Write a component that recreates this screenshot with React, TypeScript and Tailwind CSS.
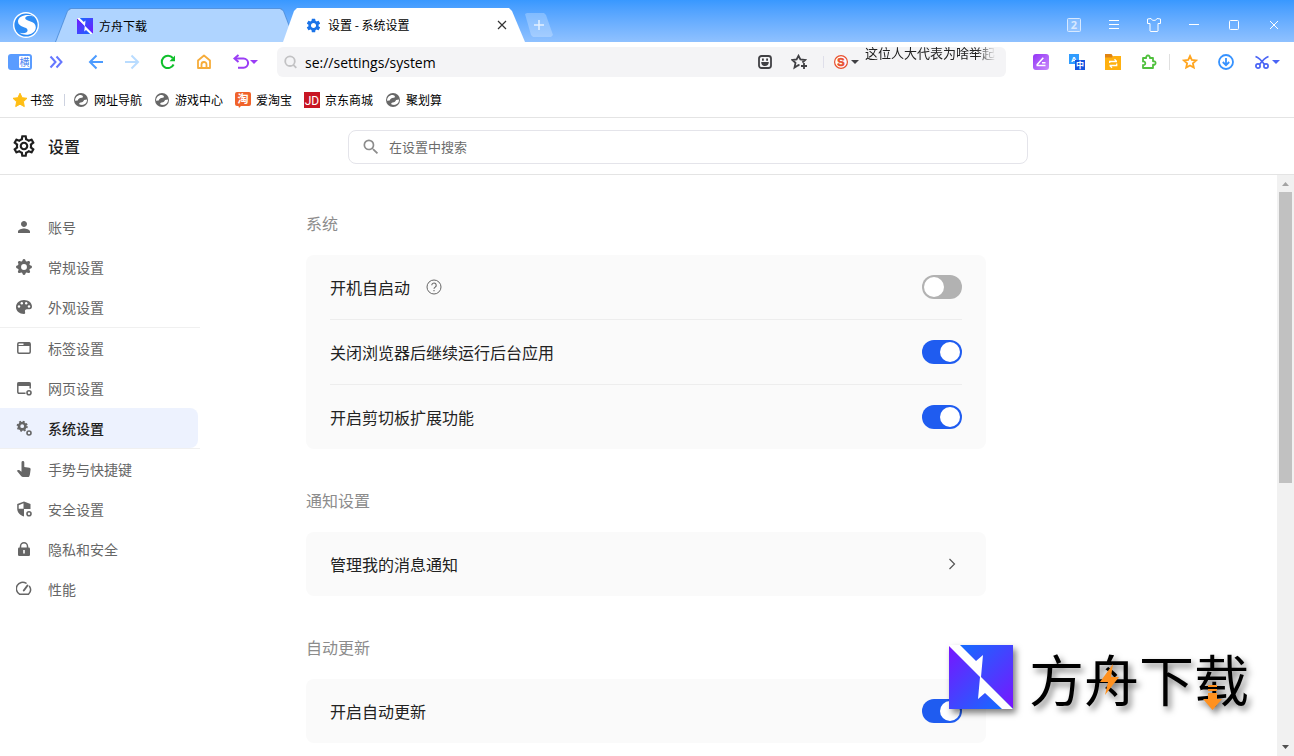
import React, { useState } from "react";
import { MdOutlineSettings, MdSettings, MdPerson, MdSearch } from "react-icons/md";
import { BsGearFill } from "react-icons/bs";

type IconProps = { className?: string };

/* ---------- brand icons ---------- */

const BrowserLogo = () => (
  <svg viewBox="0 0 26 26" className="size-[26px]" aria-hidden="true">
    <circle cx="13" cy="13" r="13" fill="#fff" />
    <circle cx="13" cy="13" r="11.6" fill="#2f8df5" />
    <path
      d="M20.5 4.4C15 1.400 5 3.600 5 9.600c0 6 9.600 5 9.600 8.600 0 2.600-3.600 3.800-8.200 2.600 6 4 16.400 1.600 16.400-5.600 0-7-10.600-5.600-10.600-9 0-2.200 3.900-3.200 8.300-1.800z"
      fill="#fff"
    />
  </svg>
);

const ArkLogo = ({ className }: IconProps) => (
  <svg viewBox="0 0 64 64" className={className} aria-hidden="true">
    <defs>
      <linearGradient id="arkTop" x1="0" y1="0" x2="1" y2="1">
        <stop offset="0" stopColor="#0a74ff" />
        <stop offset="1" stopColor="#7a14ff" />
      </linearGradient>
      <linearGradient id="arkBottom" x1="0" y1="0" x2="1" y2="1">
        <stop offset="0" stopColor="#7a14ff" />
        <stop offset="1" stopColor="#0a74ff" />
      </linearGradient>
    </defs>
    <path d="M0 0h64v64z" fill="url(#arkTop)" />
    <path d="M0 0v64h64z" fill="url(#arkBottom)" />
    <path d="M0 0h11l16 16 7-6-2 22 32 32H53L36 48l-7 6 2-22L0 1z" fill="#fff" />
  </svg>
);

const GlobeIcon = () => (
  <svg viewBox="0 0 16 16" className="size-4" aria-hidden="true">
    <circle cx="8" cy="8" r="7" fill="#676767" />
    <path d="M2 8.800C2.200 5 5 2.600 8.500 3.200c1.800.3 2 2.400.2 2.600-2.400.2-3.200.8-4 2.600z" fill="#fff" />
    <path d="M14 7.600c.2 3.800-3 6-6.500 5.200-1.600-.4-1.800-2.200 0-2.400 2.400-.2 2.800-.8 3.600-2.400z" fill="#fff" />
  </svg>
);

const TaobaoIcon = () => (
  <svg viewBox="0 0 16 16" className="size-4 overflow-visible" aria-hidden="true">
    <path d="M2 0h12a2 2 0 0 1 2 2v10a2 2 0 0 1-2 2H6l-2 2-.5-2H2a2 2 0 0 1-2-2V2a2 2 0 0 1 2-2z" fill="#f0632b" />
    <text x="8" y="11" textAnchor="middle" fontSize="11" fontWeight="700" fill="#fff">淘</text>
  </svg>
);

const JdIcon = () => (
  <svg viewBox="0 0 16 16" className="size-4 overflow-visible" aria-hidden="true">
    <rect width="16" height="16" fill="#c81623" />
    <text x="8" y="12.500" textAnchor="middle" fontSize="12" fontFamily="Roboto" fill="#fff">JD</text>
  </svg>
);

const StarIcon = () => (
  <svg viewBox="0 0 16 16" className="size-4" aria-hidden="true">
    <path d="M8 1.200l2.100 4.500 4.900.6-3.600 3.400.9 4.900L8 12.200l-4.300 2.400.9-4.900L1 6.300l4.900-.6z" fill="#ffbe14" stroke="#ffbe14" strokeLinejoin="round" />
  </svg>
);

/* ---------- toolbar icons ---------- */

const SidebarIcon = () => (
  <svg viewBox="0 0 24 16" className="h-4 w-6" aria-hidden="true">
    <rect width="24" height="16" rx="3" fill="#5a9cff" />
    <rect x="11" y="2" width="11" height="12" rx="1" fill="#fff" />
    <text x="16.500" y="12" textAnchor="middle" fontSize="10" fill="#4a7ff0">横</text>
  </svg>
);

const ChevronsIcon = () => (
  <svg viewBox="0 0 14 14" className="size-3.5" fill="none" stroke="#6577ff" strokeWidth="2" aria-hidden="true">
    <path d="M1.500 1.500L6.500 7l-5 5.500M7.500 1.500L12.500 7l-5 5.500" />
  </svg>
);

const ArrowIcon = ({ className }: IconProps) => (
  <svg viewBox="0 0 16 16" className={className} fill="none" stroke="currentColor" strokeWidth="2" aria-hidden="true">
    <path d="M15 8H2M8.500 1.500L2 8l6.500 6.500" />
  </svg>
);

const ReloadIcon = () => (
  <svg viewBox="0 0 16 16" className="size-4" aria-hidden="true">
    <path d="M13.600 10.500A6.200 6.200 0 1 1 12.800 4" fill="none" stroke="#0fbf2b" strokeWidth="2" />
    <path d="M15 1.500V7.200H9.500z" fill="#0fbf2b" />
  </svg>
);

const HomeIcon = () => (
  <svg viewBox="0 0 16 16" className="size-4" fill="none" stroke="#f6ac3a" strokeWidth="1.800" strokeLinejoin="round" aria-hidden="true">
    <path d="M2 6.500L8 1.500l6 5V14H2z" />
    <path d="M5.500 14v-3.500a2.500 2.500 0 0 1 5 0V14" />
  </svg>
);

const UndoIcon = () => (
  <svg viewBox="0 0 26 16" className="h-4 w-[26px]" aria-hidden="true">
    <path d="M3 4.500h8.500a4.600 4.600 0 0 1 0 9.200H6" fill="none" stroke="#9a3df5" strokeWidth="2" />
    <path d="M6.500 1L2.500 4.500l4 3.500" fill="none" stroke="#9a3df5" strokeWidth="2" />
    <path d="M18 6h8l-4 4z" fill="#9a3df5" />
  </svg>
);

const SmileIcon = () => (
  <svg viewBox="0 0 14 14" className="size-3.5" aria-hidden="true">
    <rect x="1" y="1" width="12" height="12" rx="2.500" fill="none" stroke="#404044" strokeWidth="1.800" />
    <path d="M4 3.500h1.800v2.200H4zM8.200 3.500H10v2.200H8.200zM3.200 7h7.600c0 2.600-1.600 4-3.800 4S3.200 9.600 3.200 7z" fill="#404044" />
  </svg>
);

const StarAddIcon = () => (
  <svg viewBox="0 0 16 16" className="size-4" fill="none" stroke="#404044" strokeWidth="1.800" aria-hidden="true">
    <path d="M8.500 11.600L7.500 11l-4 2.600 1-4.700L1.400 6l4.200-.5L7.500 1.800l1.900 3.700 4.800.5-2.800 2.500" />
    <path d="M13 9v6M10 12h6" />
  </svg>
);

const SogouIcon = () => (
  <svg viewBox="0 0 14 14" className="size-3.5" aria-hidden="true">
    <circle cx="7" cy="7" r="6.400" fill="#fff" stroke="#e8502f" strokeWidth="1.200" />
    <text x="7" y="11" textAnchor="middle" fontSize="11" fontWeight="900" fontFamily="Liberation Sans" fill="#e8502f" stroke="#e8502f" strokeWidth=".6">S</text>
  </svg>
);

const NoteIcon = () => (
  <svg viewBox="0 0 16 16" className="size-4" aria-hidden="true">
    <defs>
      <linearGradient id="note" x1="0" y1="0" x2="1" y2="1">
        <stop offset="0" stopColor="#9333f7" />
        <stop offset="1" stopColor="#c98bfa" />
      </linearGradient>
    </defs>
    <rect width="16" height="16" rx="3" fill="url(#note)" />
    <path d="M3.800 11l6.500-7.200M3.500 11.500h9M9 8.700h3.500" fill="none" stroke="#fff" strokeWidth="1.600" />
  </svg>
);

const TranslateIcon = () => (
  <svg viewBox="0 0 16 16" className="size-4" aria-hidden="true">
    <rect width="10" height="10" fill="#2f9cff" />
    <text x="5" y="8" textAnchor="middle" fontSize="8" fontWeight="700" fontFamily="Liberation Sans" fill="#fff">A</text>
    <rect x="6" y="6" width="10" height="10" fill="#1554e0" />
    <text x="11" y="14" textAnchor="middle" fontSize="8" fontWeight="700" fill="#fff">中</text>
  </svg>
);

const FolderSyncIcon = () => (
  <svg viewBox="0 0 16 16" className="size-4" aria-hidden="true">
    <path d="M0 0h6.500L8 2.500V6H0z" fill="#e08412" />
    <path d="M0 3.500h7L8.500 2H16v14H0z" fill="#ffb00f" />
    <path d="M4.700 9V7.500H12M9.500 5.200l2.200 2.200M11.700 9.500V11.500H4.500M7 13.800l-2.200-2.200" fill="none" stroke="#fff" strokeWidth="1.300" />
  </svg>
);

const PuzzleIcon = () => (
  <svg viewBox="0 0 16 16" className="size-4" fill="none" stroke="#4fc03c" strokeWidth="1.800" strokeLinejoin="round" aria-hidden="true">
    <path d="M2 4h3.200C4.800 2.500 5.800 1.500 7 1.500S9.200 2.500 8.800 4H12v3.300c1.500-.3 2.600.5 2.600 1.700s-1.100 2-2.600 1.700V14H2v-3c1.500.2 2.300-.7 2.300-1.800S3.500 7.200 2 7.500z" />
  </svg>
);

const FavoriteIcon = () => (
  <svg viewBox="0 0 16 16" className="size-4" fill="none" stroke="#ffa51f" strokeWidth="1.800" aria-hidden="true">
    <path d="M8 2l1.800 3.900 4.300.5-3.200 2.900.9 4.300L8 11.500l-3.800 2.100.9-4.300-3.200-2.900 4.300-.5z" />
  </svg>
);

const DownloadIcon = () => (
  <svg viewBox="0 0 16 16" className="size-4" fill="none" stroke="#3692ff" strokeWidth="1.800" aria-hidden="true">
    <circle cx="8" cy="8" r="7" />
    <path d="M8 4v7M4.800 8L8 11.200 11.200 8" />
  </svg>
);

const ScissorsIcon = () => (
  <svg viewBox="0 0 26 16" className="h-4 w-[26px]" aria-hidden="true">
    <g fill="none" stroke="#4a64f5" strokeWidth="1.700">
      <circle cx="4" cy="12" r="2.100" />
      <circle cx="12" cy="12" r="2.100" />
      <path d="M1.500 2.500c3 1 6 4 9 8M14.500 2.500c-3 1-6 4-9 8" />
    </g>
    <path d="M18 6h8l-4 4z" fill="#4a64f5" />
  </svg>
);

/* ---------- side menu icons ---------- */

const PaletteIcon = () => (
  <svg viewBox="0 0 16 16" className="size-4 shrink-0" aria-hidden="true">
    <path d="M8 1C3.500 1 0 4 0 8c0 3.800 3.400 7 8 7 1.400 0 1.300-1.200 1-2.200-.4-1.600.4-2.600 2-2.600h2.600c1.600 0 2.400-1 2.400-2.600C16 3.800 12.500 1 8 1z" fill="#666" />
    <g fill="#fff">
      <circle cx="3" cy="7.500" r="1.200" />
      <circle cx="5.800" cy="4.300" r="1.200" />
      <circle cx="10.200" cy="4.300" r="1.200" />
      <circle cx="13" cy="7.500" r="1.200" />
    </g>
  </svg>
);

const TabIcon = () => (
  <svg viewBox="0 0 16 16" className="size-4 shrink-0" aria-hidden="true">
    <rect x="1.800" y="2.800" width="12.400" height="10.400" rx="1.200" fill="none" stroke="#666" strokeWidth="1.500" />
    <path d="M7.500 2.500H14V6H7.500zM2 5h6v1H2z" fill="#666" />
  </svg>
);

const WebIcon = () => (
  <svg viewBox="0 0 16 16" className="size-4 shrink-0" aria-hidden="true">
    <path d="M9.500 13.200H3a1.200 1.200 0 0 1-1.200-1.200V4A1.200 1.200 0 0 1 3 2.800h10A1.200 1.200 0 0 1 14.200 4v4.500" fill="none" stroke="#666" strokeWidth="1.500" />
    <path d="M1.500 2.500h13V6h-13z" fill="#666" />
    <circle cx="13" cy="12.800" r="2" fill="#fff" stroke="#666" strokeWidth="1.600" />
  </svg>
);

const GearsIcon = () => (
  <svg viewBox="0 0 16 16" className="size-4 shrink-0" aria-hidden="true">
    <circle cx="6.200" cy="6.200" r="3.200" fill="none" stroke="#666" strokeWidth="2.600" />
    <circle cx="6.200" cy="6.200" r="4.800" fill="none" stroke="#666" strokeWidth="1.600" strokeDasharray="1.900 1.870" />
    <circle cx="13" cy="13" r="2" fill="none" stroke="#666" strokeWidth="1.600" />
  </svg>
);

const HandIcon = () => (
  <svg viewBox="0 0 16 16" className="size-4 shrink-0" fill="#666" aria-hidden="true">
    <path d="M5.500 1.500a1.400 1.400 0 0 1 2.800 0V6l5 .8c.9.200 1.400.8 1.300 1.700L14 13c-.1.900-.7 3-1.500 3H7c-.7 0-1.200-.2-1.700-.7L.8 9.800c1-.9 2-1 3-.3l1.700 1.200z" />
  </svg>
);

const ShieldIcon = () => (
  <svg viewBox="0 0 16 16" className="size-4 shrink-0" aria-hidden="true">
    <path d="M8 .5l6.500 2.600V8H8v7.500C4 14.300 1.200 11.500 1.200 7.500V3.100z" fill="#666" />
    <path d="M2.700 4.200L7.500 2.200V7.800H2.700z" fill="#fff" />
    <path d="M8 8h6c-.3 2.800-2 5-6 6.500z" fill="#fff" />
    <circle cx="13" cy="12.800" r="2" fill="#fff" stroke="#666" strokeWidth="1.600" />
  </svg>
);

const LockIcon = () => (
  <svg viewBox="0 0 16 16" className="size-4 shrink-0" aria-hidden="true">
    <path d="M4.500 7V5.200a3.500 3.500 0 0 1 7 0V7" fill="none" stroke="#666" strokeWidth="1.500" />
    <rect x="2" y="6.500" width="12" height="8.500" rx="1.200" fill="#666" />
    <path d="M7.200 9h1.600v3.500H7.200z" fill="#fff" />
  </svg>
);

const GaugeIcon = () => (
  <svg viewBox="0 0 16 16" className="size-4 shrink-0" fill="none" stroke="#666" strokeWidth="1.500" strokeLinecap="round" aria-hidden="true">
    <path d="M10 2.200A6.200 6.200 0 0 0 3.500 13.200h9a6.200 6.200 0 0 0 1-7.800" />
    <path d="M7.800 9.500l3.700-5" strokeWidth="2" />
  </svg>
);

const menuGroups = [
  [
    { label: "账号", icon: <MdPerson size={18} className="-mx-px shrink-0" /> },
    { label: "常规设置", icon: <BsGearFill size={16} className="shrink-0" /> },
    { label: "外观设置", icon: <PaletteIcon /> },
  ],
  [
    { label: "标签设置", icon: <TabIcon /> },
    { label: "网页设置", icon: <WebIcon /> },
    { label: "系统设置", icon: <GearsIcon />, active: true },
  ],
  [
    { label: "手势与快捷键", icon: <HandIcon /> },
    { label: "安全设置", icon: <ShieldIcon /> },
    { label: "隐私和安全", icon: <LockIcon /> },
    { label: "性能", icon: <GaugeIcon /> },
  ],
];

const bookmarks = [
  { label: "网址导航", icon: <GlobeIcon /> },
  { label: "游戏中心", icon: <GlobeIcon /> },
  { label: "爱淘宝", icon: <TaobaoIcon /> },
  { label: "京东商城", icon: <JdIcon /> },
  { label: "聚划算", icon: <GlobeIcon /> },
];

const windowButtons = [
  {
    label: "窗口数量",
    icon: (
      <svg viewBox="0 0 14 14" className="size-3.5" aria-hidden="true">
        <rect x=".5" y=".5" width="13" height="13" rx="1" fill="#ffffff33" stroke="#d8e9ff" />
        <text x="7" y="11" textAnchor="middle" fontSize="11" fontWeight="700" fontFamily="Open Sans" fill="#d8e9ff">2</text>
      </svg>
    ),
  },
  {
    label: "菜单",
    icon: (
      <svg viewBox="0 0 14 14" className="size-3.5" stroke="#fff" aria-hidden="true">
        <path d="M2 2.500h10M2 6.500h10M2 10.500h10" />
      </svg>
    ),
  },
  {
    label: "皮肤",
    icon: (
      <svg viewBox="0 0 14 14" className="size-3.5" fill="none" stroke="#fff" strokeLinejoin="round" aria-hidden="true">
        <path d="M.500 1l3.500-.500c.5 2.500 5.500 2.500 6 0l3.500.500v4.500H11V13l-.5.500h-7L3 13V5.500H.500z" />
      </svg>
    ),
  },
  {
    label: "最小化",
    icon: (
      <svg viewBox="0 0 14 14" className="size-3.5" stroke="#fff" aria-hidden="true">
        <path d="M2 6.500h10" />
      </svg>
    ),
  },
  {
    label: "最大化",
    icon: (
      <svg viewBox="0 0 14 14" className="size-3.5" fill="none" stroke="#fff" aria-hidden="true">
        <rect x="2.500" y="2.500" width="9" height="9" rx="1" />
      </svg>
    ),
  },
  {
    label: "关闭",
    icon: (
      <svg viewBox="0 0 14 14" className="size-3.5" stroke="#fff" aria-hidden="true">
        <path d="M3 3l8 8M11 3l-8 8" />
      </svg>
    ),
  },
];

function ToolButton({ label, children }: { label: string; children: React.ReactNode }) {
  return (
    <button aria-label={label} className="flex h-6 min-w-6 items-center justify-center">
      {children}
    </button>
  );
}

function TitleBar() {
  return (
    <header className="flex h-[42px] shrink-0 items-end bg-linear-to-b from-[#3898ff] to-[#8fc1ff] text-xs text-black">
      <div className="flex h-[34px] w-[55px] shrink-0 items-center pl-[13px]">
        <BrowserLogo />
      </div>

      <div className="h-[34px] w-[241px] bg-[#5493de] pt-px [clip-path:polygon(0_100%,12px_3px,15px_0,calc(100%_-_15px)_0,calc(100%_-_12px)_3px,100%_100%)]">
        <button className="flex h-full w-full items-center gap-1.5 bg-[#afd4ff] pl-[22px] [clip-path:polygon(1px_100%,13px_2px,16px_0,calc(100%_-_16px)_0,calc(100%_-_13px)_2px,calc(100%_-_1px)_100%)]">
          <ArkLogo className="size-4" />
          <span>方舟下载</span>
        </button>
      </div>
      <div className="-ml-[13px] flex h-[34px] w-[242px] items-center bg-white pr-4 pl-[22px] [clip-path:polygon(0_100%,11px_3px,14px_0,calc(100%_-_16px)_0,calc(100%_-_13px)_3px,100%_100%)]">
        <button className="flex flex-1 items-center gap-1.5 text-left">
          <MdSettings size={17} color="#1a73e8" />
          <span>设置 - 系统设置</span>
        </button>
        <button aria-label="关闭标签" className="flex size-[14px] items-center justify-center">
          <svg viewBox="0 0 10 10" className="size-2.5" stroke="#333" strokeWidth="1.200" aria-hidden="true">
            <path d="M1 1l8 8M9 1L1 9" />
          </svg>
        </button>
      </div>
      <div className="flex h-[34px] items-center">
        <button aria-label="新建标签" className="flex h-6 w-7 items-center justify-center bg-white/25 [clip-path:polygon(0_1px,2px_0,calc(100%_-_9px)_0,calc(100%_-_7px)_2px,100%_calc(100%_-_2px),calc(100%_-_2px)_100%,8px_100%,6px_calc(100%_-_2px))]">
          <svg viewBox="0 0 10 10" className="size-2.5" stroke="#e3f0ff" strokeWidth="1.500" aria-hidden="true">
            <path d="M5 0v10M0 5h10" />
          </svg>
        </button>
      </div>

      <div className="ml-auto flex h-[34px]">
        {windowButtons.map((b) => (
          <button key={b.label} aria-label={b.label} className="flex w-10 items-center justify-center">
            {b.icon}
          </button>
        ))}
      </div>
    </header>
  );
}

function Toolbar() {
  const [url, setUrl] = useState("se://settings/system");

  return (
    <div className="flex h-10 shrink-0 items-center bg-white pr-[14px] pl-2">
      <div className="flex items-center gap-3">
        <ToolButton label="侧边栏"><SidebarIcon /></ToolButton>
        <ToolButton label="展开"><ChevronsIcon /></ToolButton>
      </div>
      <div className="ml-4 flex items-center gap-3">
        <ToolButton label="后退"><ArrowIcon className="size-4 text-[#4c9bff]" /></ToolButton>
        <ToolButton label="前进"><ArrowIcon className="size-4 rotate-180 text-[#b9dcff]" /></ToolButton>
        <ToolButton label="刷新"><ReloadIcon /></ToolButton>
        <ToolButton label="主页"><HomeIcon /></ToolButton>
      </div>
      <div className="mr-[19px] ml-4 flex">
        <ToolButton label="恢复"><UndoIcon /></ToolButton>
      </div>

      <div className="flex h-[30px] min-w-0 flex-1 items-center rounded-md bg-[#f4f4f6] pr-2.5 pl-[7px]">
        <svg viewBox="0 0 14 14" className="size-3.5 shrink-0" fill="none" stroke="#c2c2c4" strokeWidth="1.800" aria-hidden="true">
          <circle cx="6" cy="6.200" r="4.800" />
          <path d="M9.300 9.800l3 3" />
        </svg>
        <input
          aria-label="地址栏"
          value={url}
          onChange={(e) => setUrl(e.target.value)}
          className="ml-[7px] min-w-0 flex-1 bg-transparent font-['Open_Sans','Noto_Sans_CJK_SC',sans-serif] text-[14px] text-black outline-none"
        />
        <div className="flex items-center gap-2.5">
          <ToolButton label="表情"><SmileIcon /></ToolButton>
          <ToolButton label="收藏"><StarAddIcon /></ToolButton>
        </div>
        <span className="mr-2.5 ml-3 h-3 w-px bg-[#dfdfea]" />
        <button aria-label="搜索引擎" className="flex items-center gap-[3px]">
          <SogouIcon />
          <svg viewBox="0 0 8 4" className="h-1 w-2" fill="#404044" aria-hidden="true"><path d="M0 0h8L4 4z" /></svg>
        </button>
        <a href="#" className="-mt-0.5 ml-1.5 w-[131px] self-start mask-r-from-85% text-[13px] leading-4 whitespace-nowrap text-[#222]">
          这位人大代表为啥举起
        </a>
      </div>

      <div className="ml-[23px] flex items-center gap-3">
        <ToolButton label="笔记"><NoteIcon /></ToolButton>
        <ToolButton label="翻译"><TranslateIcon /></ToolButton>
        <ToolButton label="文件同步"><FolderSyncIcon /></ToolButton>
        <ToolButton label="扩展"><PuzzleIcon /></ToolButton>
      </div>
      <span className="mx-2 h-4 w-px bg-[#e0e0e0]" />
      <div className="flex items-center gap-3">
        <ToolButton label="收藏夹"><FavoriteIcon /></ToolButton>
        <ToolButton label="下载"><DownloadIcon /></ToolButton>
      </div>
      <div className="ml-4 flex">
        <ToolButton label="截图"><ScissorsIcon /></ToolButton>
      </div>
    </div>
  );
}

function BookmarkBar() {
  return (
    <nav className="flex h-9 shrink-0 items-center border-b border-[#e4e4e4] bg-white pl-3 text-xs text-black">
      <a href="#" className="flex items-center gap-0.5"><StarIcon />书签</a>
      <span className="mr-2 ml-2.5 h-3 w-px bg-[#cdd2e0]" />
      <div className="flex gap-3">
        {bookmarks.map((b) => (
          <a key={b.label} href="#" className="flex items-center gap-[5px]">
            {b.icon}
            {b.label}
          </a>
        ))}
      </div>
    </nav>
  );
}

function SideMenu() {
  return (
    <nav className="w-[200px] shrink-0 pt-8 text-sm text-[#666]">
      {menuGroups.map((group, i) => (
        <ul key={i} className="border-b border-[#f0f0f0] last:border-b-0">
          {group.map((item) => (
            <li key={item.label}>
              <a
                href="#"
                className={`mr-0.5 flex h-10 items-center gap-4 rounded-r-lg pl-4 ${
                  "active" in item ? "bg-[#edf2fe] font-medium" : ""
                }`}
              >
                {item.icon}
                <span className={"active" in item ? "text-[#1f1f1f]" : ""}>{item.label}</span>
              </a>
            </li>
          ))}
        </ul>
      ))}
    </nav>
  );
}

function Section({ title, children }: { title: string; children: React.ReactNode }) {
  return (
    <section>
      <h2 className="mb-5 h-6 text-base text-[#8c8c8c]">{title}</h2>
      <div className="divide-y divide-[#ededed] rounded-lg bg-[#fafafa] px-6">{children}</div>
    </section>
  );
}

function ToggleRow({ id, label, help, defaultChecked }: { id: string; label: string; help?: boolean; defaultChecked?: boolean }) {
  return (
    <div className="box-content flex h-16 items-center">
      <label htmlFor={id}>{label}</label>
      {help && (
        <button aria-label="帮助" className="ml-4">
          <svg viewBox="0 0 16 16" className="size-4" fill="none" stroke="#666" aria-hidden="true">
            <circle cx="8" cy="8" r="7" />
            <path d="M5.800 6.300a2.200 2.200 0 1 1 3.400 1.800C8.300 8.700 8 9 8 9.800M8 11v1.200" strokeWidth="1.100" />
          </svg>
        </button>
      )}
      <input
        id={id}
        type="checkbox"
        defaultChecked={defaultChecked}
        className="ml-auto h-6 w-10 appearance-none rounded-full bg-[#b2b2b2] p-0.5 before:block before:size-5 before:rounded-full before:bg-white checked:bg-[#1f5cf0] checked:before:translate-x-4"
      />
    </div>
  );
}

function ScrollBar() {
  return (
    <div className="flex w-[17px] shrink-0 flex-col items-center justify-between bg-[#f1f1f1]">
      <div className="flex flex-col items-center">
        <svg viewBox="0 0 17 17" className="size-[17px]" fill="#a3a3a3" aria-hidden="true"><path d="M5 11h7L8.500 7z" /></svg>
        <div className="h-[291px] w-[13px] bg-[#c1c1c1]" />
      </div>
      <svg viewBox="0 0 17 17" className="size-[17px]" fill="#505050" aria-hidden="true"><path d="M5 6h7l-3.500 4z" /></svg>
    </div>
  );
}

function Watermark() {
  return (
    <div className="pointer-events-none absolute right-[45px] bottom-[47px] flex h-16 items-center gap-4 drop-shadow-[3px_4px_3px_rgba(0,0,0,0.5)]">
      <ArkLogo className="size-16" />
      <div className="relative text-[55px] leading-none text-black">
        方舟下载
        <svg viewBox="0 0 220 64" className="absolute inset-x-0 top-0 h-16 w-[220px]" fill="#ff911f" aria-hidden="true">
          <path d="M84 14L71 32h8l-3 13 14-18h-8z" />
          <path d="M179 35h9v2h-9zM179 39h9v2h-9zM179 43h9v6h5l-9.500 11L174 49h5z" />
        </svg>
      </div>
    </div>
  );
}

export default function App() {
  return (
    <div className="relative flex h-screen flex-col overflow-hidden bg-white font-['Noto_Sans_CJK_SC',sans-serif]">
      <TitleBar />
      <Toolbar />
      <BookmarkBar />

      {/* Settings header */}
      <div className="flex h-[57px] shrink-0 items-center border-b border-[#e4e4e4] pr-4">
        <div className="flex w-[348px] shrink-0 items-center gap-[11px] pl-[11px] text-[#1f1f1f]">
          <MdOutlineSettings size={26} />
          <h1 className="text-base font-medium">设置</h1>
        </div>
        <div className="mb-2.5 flex h-[34px] w-full max-w-[680px] items-center self-end rounded-lg border border-[#e4e4ea] pl-3">
          <MdSearch size={20} color="#8c8c8c" />
          <input
            type="search"
            aria-label="在设置中搜索"
            placeholder="在设置中搜索"
            className="ml-2 min-w-0 flex-1 bg-transparent text-[13px] outline-none placeholder:text-[#6c6c6c]"
          />
        </div>
      </div>

      <div className="flex min-h-0 flex-1">
        <SideMenu />
        <main className="min-w-0 flex-1 overflow-hidden pt-9 pr-4 pl-[106px] text-base text-[#222]">
          <div className="flex max-w-[680px] flex-col gap-[39px]">
            <Section title="系统">
              <ToggleRow id="autostart" label="开机自启动" help />
              <ToggleRow id="background" label="关闭浏览器后继续运行后台应用" defaultChecked />
              <ToggleRow id="clipboard" label="开启剪切板扩展功能" defaultChecked />
            </Section>
            <Section title="通知设置">
              <button className="flex h-16 w-full items-center justify-between">
                管理我的消息通知
                <svg viewBox="0 0 20 16" className="h-4 w-5" fill="none" stroke="#555" strokeWidth="1.200" aria-hidden="true">
                  <path d="M7.500 3l5 5-5 5" />
                </svg>
              </button>
            </Section>
            <Section title="自动更新">
              <ToggleRow id="update" label="开启自动更新" defaultChecked />
            </Section>
          </div>
        </main>
        <ScrollBar />
      </div>

      <Watermark />
    </div>
  );
}
